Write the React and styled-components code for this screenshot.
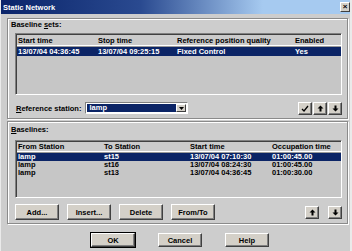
import React from "react";
import styled, { createGlobalStyle } from "styled-components";

const Global = createGlobalStyle`
  html, body { margin: 0; padding: 0; background: #cdcdcd; }
  * { box-sizing: border-box; }
`;

const Window = styled.div`
  width: 352px;
  height: 251px;
  background: #cdcdcd;
  font-family: "Liberation Sans", Arial, sans-serif;
  font-size: 7.5px;
  font-weight: bold;
  color: #000;
  display: flex;
  flex-direction: column;
  border-right: 2px solid #eaeaea;
  border-left: 1px solid #eaeaea;
`;

const TitleBar = styled.div`
  height: 14px;
  background: linear-gradient(90deg, #0a246a 0%, #2a4a90 40%, #a6caf0 75%, #a6caf0 100%);
  color: #fff;
  display: flex;
  align-items: center;
  padding-left: 2px;
  font-size: 7.5px;
  justify-content: space-between;
`;

const CloseBtn = styled.div`
  width: 10px;
  height: 10px;
  background: #d4d0c8;
  border: 1px solid;
  border-color: #fff #404040 #404040 #fff;
  color: #000;
  font-size: 8px;
  line-height: 8px;
  text-align: center;
  margin-right: 0px;
`;

const Body = styled.div`
  display: flex;
  flex-direction: column;
  padding: 4px 2px 0 6px;
`;

const Group = styled.div`
  height: ${(p) => p.$h}px;
  margin-top: ${(p) => p.$mt || 0}px;
  border: 1px solid #8a8a8a;
  box-shadow: inset 1px 1px 0 #fff, 1px 1px 0 #fff;
  display: flex;
  flex-direction: column;
  padding: ${(p) => p.$pt}px 5px 0 7px;
`;

const Legend = styled.div`
  margin-left: -4px;
  height: 9px;
  line-height: 9px;
  & u { text-decoration: underline; }
`;

const List = styled.div`
  margin-top: ${(p) => p.$mt}px;
  height: ${(p) => p.$h}px;
  background: #c6c6c6;
  border: 1px solid;
  border-color: #808080 #fff #fff #808080;
  box-shadow: inset 1px 1px 0 #404040;
  padding: 1px 0 0 1px;
`;

const Row = styled.div`
  display: grid;
  grid-template-columns: ${(p) => p.$cols};
  height: ${(p) => p.$h}px;
  line-height: ${(p) => p.$h}px;
  padding-left: 1px;
  background: ${(p) => (p.$sel ? "#0b2466" : "transparent")};
  color: ${(p) => (p.$sel ? "#fff" : "#000")};
  white-space: nowrap;
`;

const Header = styled(Row)`
  background: #cbcbcb;
  border-bottom: 1px solid #fff;
  box-shadow: 0 1px 0 #9a9a9a;
  margin-bottom: 1px;
`;

const StationRow = styled.div`
  display: flex;
  align-items: center;
  margin-top: 7px;
  height: 12px;
  padding-left: 1px;
`;

const Combo = styled.div`
  margin-left: 4px;
  width: 103px;
  height: 12px;
  background: #fff;
  border: 1px solid;
  border-color: #808080 #fff #fff #808080;
  display: flex;
  padding: 1px;
`;

const ComboText = styled.div`
  flex: 1;
  background: #0b2466;
  color: #fff;
  line-height: 8px;
  padding-left: 2px;
`;

const ComboBtn = styled.div`
  width: 10px;
  background: #d4d0c8;
  border: 1px solid;
  border-color: #fff #404040 #404040 #fff;
  display: flex;
  align-items: center;
  justify-content: center;
`;

const Spacer = styled.div`
  flex: 1;
`;

const IconBtn = styled.div`
  width: 14px;
  height: 13px;
  margin-left: 1px;
  background: #d4d0c8;
  border: 1px solid;
  border-color: #fff #404040 #404040 #fff;
  box-shadow: inset -1px -1px 0 #808080;
  display: flex;
  align-items: center;
  justify-content: center;
`;

const ButtonRow = styled.div`
  display: flex;
  align-items: center;
  gap: 8px;
  margin-top: 6px;
  height: 16px;
`;

const Button = styled.div`
  width: 44px;
  height: ${(p) => p.$h || 16}px;
  background: #d4d0c8;
  border: 1px solid;
  border-color: #fff #404040 #404040 #fff;
  box-shadow: inset -1px -1px 0 #808080;
  display: flex;
  align-items: center;
  justify-content: center;
  outline: ${(p) => (p.$def ? "1px solid #000" : "none")};
`;

const Footer = styled.div`
  display: flex;
  justify-content: center;
  gap: 23px;
  margin-top: 9px;
  padding-left: 5px;
`;

const Arrow = ({ up }) => (
  <svg width="7" height="7" viewBox="0 0 7 7">
    {up ? (
      <path d="M3.5 0.5 L6.5 3.5 L4.5 3.5 L4.5 6.5 L2.5 6.5 L2.5 3.5 L0.5 3.5 Z" fill="#000" />
    ) : (
      <path d="M3.5 6.5 L6.5 3.5 L4.5 3.5 L4.5 0.5 L2.5 0.5 L2.5 3.5 L0.5 3.5 Z" fill="#000" />
    )}
  </svg>
);

const Check = () => (
  <svg width="8" height="7" viewBox="0 0 8 7">
    <path d="M1 4 L3 6 L7 1" stroke="#000" strokeWidth="1.3" fill="none" />
  </svg>
);

const cols1 = "80px 79px 118px 1fr";
const cols2 = "86px 86px 82px 1fr";

const baselines = [
  ["lamp", "st15", "13/07/04 07:10:30", "01:00:45.00"],
  ["lamp", "st16", "13/07/04 08:24:30", "01:00:45.00"],
  ["lamp", "st13", "13/07/04 04:36:45", "01:00:30.00"],
];

export default function App() {
  return (
    <>
      <Global />
      <Window>
        <TitleBar>
          <span>Static Network</span>
          <CloseBtn>×</CloseBtn>
        </TitleBar>
        <Body>
          <Group $h={101} $pt={1}>
            <Legend>Baseline <u>s</u>ets:</Legend>
            <List $mt={4} $h={62}>
              <Header $cols={cols1} $h={11}>
                <span>Start time</span>
                <span>Stop time</span>
                <span>Reference position quality</span>
                <span>Enabled</span>
              </Header>
              <Row $cols={cols1} $h={9} $sel>
                <span>13/07/04 04:36:45</span>
                <span>13/07/04 09:25:15</span>
                <span>Fixed Control</span>
                <span>Yes</span>
              </Row>
            </List>
            <StationRow>
              <span><u>R</u>eference station:</span>
              <Combo>
                <ComboText>lamp</ComboText>
                <ComboBtn>
                  <svg width="5" height="3" viewBox="0 0 5 3"><path d="M0 0 H5 L2.5 3 Z" fill="#000" /></svg>
                </ComboBtn>
              </Combo>
              <Spacer />
              <IconBtn><Check /></IconBtn>
              <IconBtn><Arrow up /></IconBtn>
              <IconBtn><Arrow /></IconBtn>
            </StationRow>
          </Group>
          <Group $h={103} $mt={2} $pt={3}>
            <Legend><u>B</u>aselines:</Legend>
            <List $mt={6} $h={58}>
              <Header $cols={cols2} $h={10}>
                <span>From Station</span>
                <span>To Station</span>
                <span>Start time</span>
                <span>Occupation time</span>
              </Header>
              {baselines.map((b, i) => (
                <Row key={i} $cols={cols2} $h={8} $sel={i === 0}>
                  {b.map((c, j) => (
                    <span key={j}>{c}</span>
                  ))}
                </Row>
              ))}
            </List>
            <ButtonRow>
              <Button>Add...</Button>
              <Button>Insert...</Button>
              <Button>Delete</Button>
              <Button>From/To</Button>
              <Spacer />
              <IconBtn><Arrow up /></IconBtn>
              <IconBtn><Arrow /></IconBtn>
            </ButtonRow>
          </Group>
          <Footer>
            <Button $h={14} $def>OK</Button>
            <Button $h={14}>Cancel</Button>
            <Button $h={14}>Help</Button>
          </Footer>
        </Body>
      </Window>
    </>
  );
}
